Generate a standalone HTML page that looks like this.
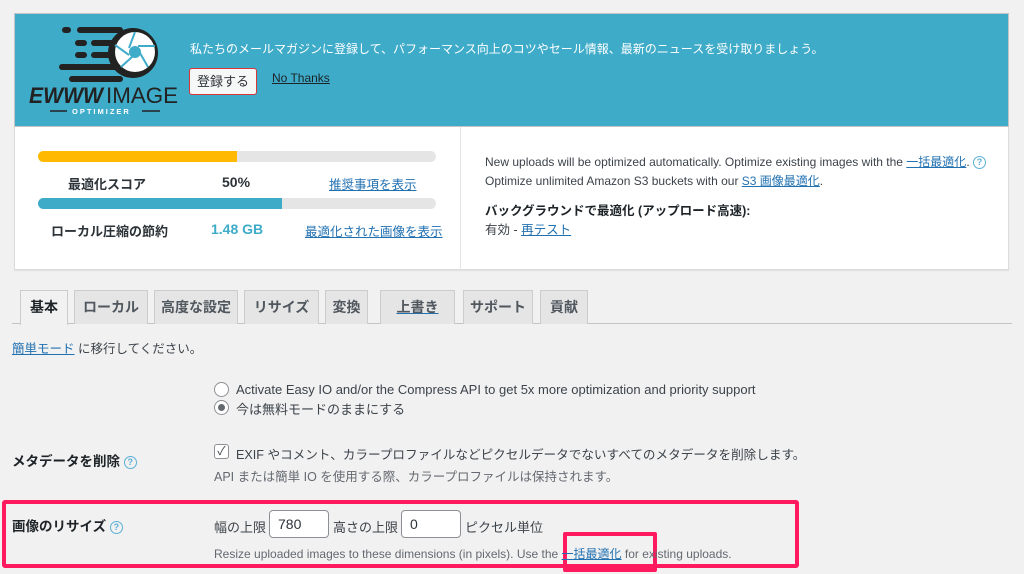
<!DOCTYPE html>
<html><head><meta charset="utf-8"><style>
*{margin:0;padding:0;box-sizing:border-box}
body{width:1024px;height:574px;background:#f1f1f1;font-family:"Liberation Sans","Noto Sans CJK JP",sans-serif;font-size:13px;color:#3c434a;position:relative;overflow:hidden}
.a{position:absolute;white-space:nowrap}
a,.lk{color:#2271b1;text-decoration:underline}
.tab{position:absolute;top:290px;height:34px;background:#e5e5e5;border:1px solid #ccc;border-bottom:none;font-weight:bold;font-size:14px;color:#50575e;text-align:center;line-height:32px}
.q{display:inline-block;width:13px;height:13px;border:1.5px solid #5ab0d6;border-radius:50%;color:#5ab0d6;font-size:9px;line-height:10px;text-align:center;font-weight:bold;vertical-align:1px}
.in{position:absolute;height:28px;background:#fff;border:1px solid #8c8f94;border-radius:4px;padding-left:8px;line-height:26px;font-size:14px;color:#2c3338}
.g{color:#646970}
</style></head><body>
<div class="a" style="left:14px;top:13px;width:995px;height:114px;background:#3eabc9;border:1px solid #c3c4c7"></div>
<svg class="a" style="left:20px;top:15px;display:block" width="170" height="105" viewBox="0 0 170 105">
<g stroke="#222" stroke-linecap="round" stroke-width="6">
<line x1="45" y1="15" x2="48" y2="15"/><line x1="60" y1="15" x2="100" y2="15"/>
<line x1="58" y1="28" x2="64" y2="28"/><line x1="74" y1="28" x2="92" y2="28"/>
<line x1="58" y1="40" x2="64" y2="40"/><line x1="74" y1="40" x2="92" y2="40"/>
<line x1="42" y1="52" x2="95" y2="52"/>
<line x1="52" y1="64" x2="100" y2="64"/>
</g>
<circle cx="113" cy="38" r="25" fill="#222"/>
<circle cx="115" cy="37" r="20" fill="#fff"/>
<g stroke="#3eabc9" stroke-width="2">
<line x1="115" y1="17" x2="109" y2="33"/><line x1="135" y1="31" x2="118" y2="31"/><line x1="128" y1="52" x2="120" y2="38"/><line x1="101" y1="52" x2="112" y2="42"/><line x1="95" y1="30" x2="109" y2="40"/>
</g>
<circle cx="115" cy="37" r="6" fill="#3eabc9"/>
<text x="9" y="88" font-family="Liberation Sans" font-weight="bold" font-style="italic" font-size="22" fill="#222" textLength="74" lengthAdjust="spacingAndGlyphs">EWWW</text>
<text x="86" y="88" font-family="Liberation Sans" font-size="22" fill="#222" textLength="72" lengthAdjust="spacingAndGlyphs">IMAGE</text>
<text x="52" y="99" font-family="Liberation Sans" font-weight="bold" font-size="7.5" fill="#fff" letter-spacing="2">OPTIMIZER</text>
<line x1="30" y1="96" x2="47" y2="96" stroke="#222" stroke-width="1.5"/><line x1="122" y1="96" x2="140" y2="96" stroke="#222" stroke-width="1.5"/>
</svg>
<div class="a" style="left:190px;top:40px;color:#fff;font-size:12px">私たちのメールマガジンに登録して、パフォーマンス向上のコツやセール情報、最新のニュースを受け取りましょう。</div>
<div class="a" style="left:189px;top:68px;width:68px;height:27px;background:#f6f7f7;border:1px solid #d63638;border-radius:3px;font-size:13px;line-height:25px;text-align:center;color:#2c3338">登録する</div>
<div class="a" style="left:272px;top:71px;color:#1d2327;text-decoration:underline;font-size:12px">No Thanks</div>

<div class="a" style="left:14px;top:127px;width:995px;height:143px;background:#fff;border:1px solid #dcdcde;border-top:none;box-shadow:0 1px 1px rgba(0,0,0,.08)"></div>
<div class="a" style="left:460px;top:127px;width:1px;height:143px;background:#e5e5e5"></div>
<div class="a" style="left:38px;top:151px;width:398px;height:11px;background:#e5e5e5;border-radius:6px;overflow:hidden"><div style="width:199px;height:11px;background:#ffb900"></div></div>
<div class="a" style="left:68px;top:174px;font-weight:bold;font-size:13px;color:#2c3338">最適化スコア</div>
<div class="a" style="left:222px;top:174px;font-weight:bold;font-size:14px;color:#2c3338">50%</div>
<div class="a lk" style="left:329px;top:174px;font-size:12.5px">推奨事項を表示</div>
<div class="a" style="left:38px;top:198px;width:398px;height:11px;background:#e5e5e5;border-radius:6px;overflow:hidden"><div style="width:244px;height:11px;background:#3eabc9"></div></div>
<div class="a" style="left:51px;top:221px;font-weight:bold;font-size:13px;color:#2c3338">ローカル圧縮の節約</div>
<div class="a" style="left:211px;top:221px;font-weight:bold;font-size:14px;color:#3eabc9">1.48 GB</div>
<div class="a lk" style="left:305px;top:221px;font-size:12.5px">最適化された画像を表示</div>
<div class="a" style="left:485px;top:153px;font-size:12px">New uploads will be optimized automatically. Optimize existing images with the <span class="lk">一括最適化</span>. <span class="q">?</span></div>
<div class="a" style="left:485px;top:172px;font-size:12px">Optimize unlimited Amazon S3 buckets with our <span class="lk">S3 画像最適化</span>.</div>
<div class="a" style="left:485px;top:200px;font-size:12.5px;font-weight:bold;color:#1d2327">バックグラウンドで最適化 (アップロード高速):</div>
<div class="a" style="left:485px;top:219px;font-size:12.5px">有効 - <span class="lk">再テスト</span></div>

<div class="a" style="left:12px;top:323px;width:1000px;height:1px;background:#c3c4c7"></div>
<div class="tab" style="left:20px;width:48px;height:35px;background:#f1f1f1;color:#1d2327">基本</div>
<div class="tab" style="left:74px;width:74px">ローカル</div>
<div class="tab" style="left:154px;width:84px">高度な設定</div>
<div class="tab" style="left:244px;width:75px">リサイズ</div>
<div class="tab" style="left:325px;width:43px">変換</div>
<div class="tab" style="left:380px;width:75px"><span style="text-decoration:underline;text-decoration-color:#2271b1">上書き</span></div>
<div class="tab" style="left:463px;width:70px">サポート</div>
<div class="tab" style="left:540px;width:48px">貢献</div>
<div class="a" style="left:12px;top:338px;font-size:12.5px"><span class="lk">簡単モード</span> に移行してください。</div>

<div class="a" style="left:214px;top:382px;width:15px;height:15px;border:1px solid #8c8f94;border-radius:50%;background:#fff"></div>
<div class="a" style="left:236px;top:382px;font-size:13px">Activate Easy IO and/or the Compress API to get 5x more optimization and priority support</div>
<div class="a" style="left:214px;top:400px;width:15px;height:15px;border:1px solid #8c8f94;border-radius:50%;background:#fff"><div style="width:7px;height:7px;border-radius:50%;background:#646970;margin:3px"></div></div>
<div class="a" style="left:236px;top:399px;font-size:13px">今は無料モードのままにする</div>

<div class="a" style="left:12px;top:450px;font-weight:bold;font-size:13.5px;color:#1d2327">メタデータを削除 <span class="q">?</span></div>
<div class="a" style="left:214px;top:444px;width:15px;height:15px;border:1px solid #8c8f94;border-radius:3px;background:#fff;font-size:12px;line-height:13px;text-align:center;color:#3c434a">✓</div>
<div class="a" style="left:236px;top:444px;font-size:12.6px">EXIF やコメント、カラープロファイルなどピクセルデータでないすべてのメタデータを削除します。</div>
<div class="a g" style="left:214px;top:466px;font-size:12.5px">API または簡単 IO を使用する際、カラープロファイルは保持されます。</div>

<div class="a" style="left:2px;top:500px;width:797px;height:68px;border:4px solid #ff1a5f;border-radius:3px"></div>
<div class="a" style="left:563px;top:532px;width:94px;height:40px;border:4px solid #ff1a5f;border-radius:2px"></div>
<div class="a" style="left:12px;top:515px;font-weight:bold;font-size:13.5px;color:#1d2327">画像のリサイズ <span class="q">?</span></div>
<div class="a" style="left:214px;top:517px;font-size:13px">幅の上限</div>
<div class="in" style="left:269px;top:510px;width:60px">780</div>
<div class="a" style="left:333px;top:517px;font-size:13px">高さの上限</div>
<div class="in" style="left:401px;top:510px;width:60px">0</div>
<div class="a" style="left:465px;top:517px;font-size:13px">ピクセル単位</div>
<div class="a g" style="left:214px;top:545px;font-size:12px">Resize uploaded images to these dimensions (in pixels). Use the <span class="lk">一括最適化</span> for existing uploads.</div>
</body></html>
